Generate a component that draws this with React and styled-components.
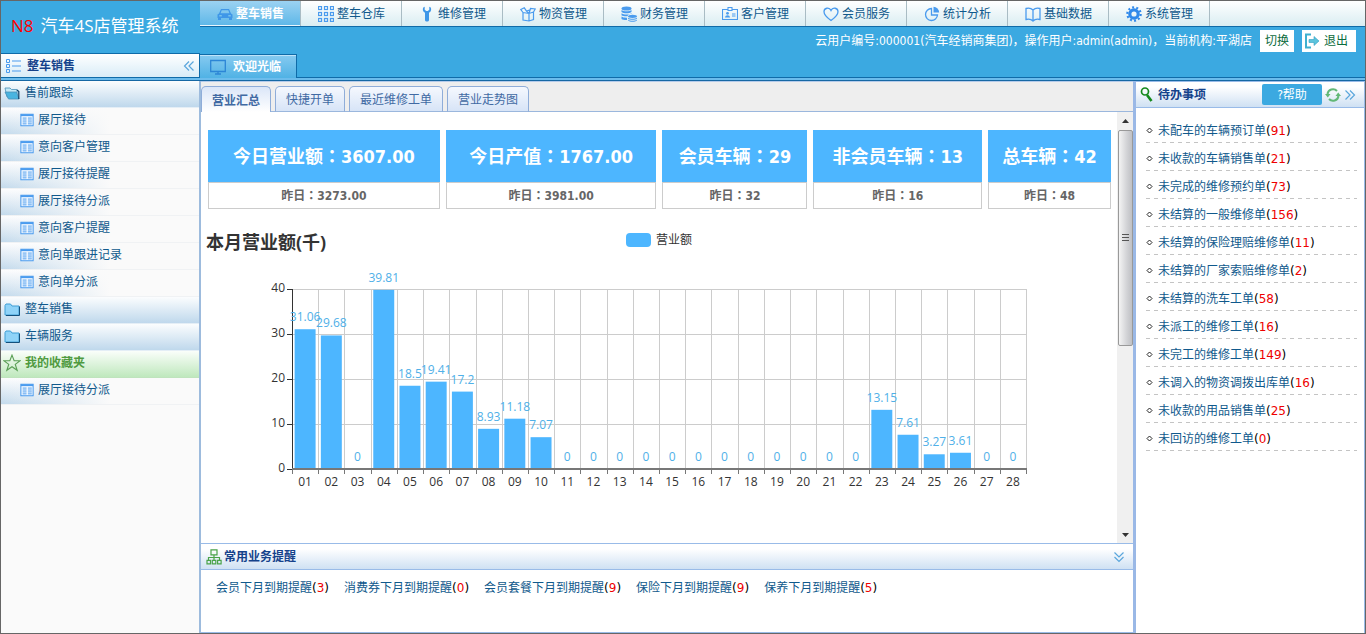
import React from "react";
import styled, { createGlobalStyle } from "styled-components";

const uiFont = `"DejaVu Sans Condensed", "Noto Sans CJK SC", sans-serif`;
const chartFont = `"Open Sans", "Noto Sans CJK SC", sans-serif`;

const GlobalStyle = createGlobalStyle`
    * {
        box-sizing: border-box;
    }
    body {
        margin: 0;
        font-family: ${uiFont};
        font-size: 12px;
        line-height: 16px;
        color: #000;
    }
    button {
        font: inherit;
        border: 0;
        padding: 0;
        background: none;
        cursor: pointer;
    }
    a {
        color: #10598c;
        text-decoration: none;
    }
    ul, h1, h2, h3, p {
        margin: 0;
        padding: 0;
        list-style: none;
        font-size: inherit;
        font-weight: inherit;
    }
    svg {
        display: block;
        flex-shrink: 0;
    }
`
const Page = styled.div`
    display: flex;
    flex-direction: column;
    height: 100vh;
    min-width: 1280px;
    border: 1px solid #666;
    background-color: #fff;
    overflow: hidden;
`
const Header = styled.header`
    display: flex;
    background-color: #3ba9e1;
`
const HeaderLeft = styled.div`
    width: 199px;
    flex-shrink: 0;
    display: flex;
    flex-direction: column;
`
const HeaderRight = styled.div`
    flex: 1;
    display: flex;
    flex-direction: column;
`
const Brand = styled.h1`
    height: 52px;
    padding: 0 0 2px 10px;
    display: flex;
    align-items: center;
    column-gap: 7px;
    font-family: ${chartFont};
    font-size: 17px;
    color: #fff;
`
const BrandMark = styled.span`
    color: #f00;
    font-weight: 500;
`
const SideTitle = styled.h2`
    height: 25px;
    padding: 0 4px;
    display: flex;
    align-items: center;
    border-top: 1px solid #0f6ba8;
    border-bottom: 1px solid #0f6ba8;
    border-right: 1px solid #0f6ba8;
    background: linear-gradient(#fff, #d8ecf7);
    color: #15428b;
    font-weight: bold;

    span {
        flex: 1;
        padding-left: 6px;
    }
`
const Nav = styled.nav`
    display: flex;
    height: 26px;
    border-bottom: 1px solid #0f6ba8;
    background: linear-gradient(#fff, #d9edf2);
`
const NavItem = styled.button`
    width: 101px;
    padding: 0 0 0 17px;
    display: flex;
    align-items: center;
    column-gap: 3px;
    border-right: 1px solid #a9bcc4;
    color: ${(p) => (p.$active ? "#fff" : "#10598c")};
    font-weight: ${(p) => (p.$active ? "bold" : "normal")};
    background: ${(p) => (p.$active ? "linear-gradient(#9bd2f2, #5db7e8)" : "none")};
    box-shadow: ${(p) => (p.$active ? "inset 0 -1px #e8f6fd" : "none")};
`
const UserBar = styled.div`
    height: 27px;
    padding: 1px 9px 0 0;
    display: flex;
    align-items: center;
    justify-content: flex-end;
    column-gap: 8px;
    color: #fff;
`
const UserButton = styled.button`
    height: 22px;
    padding: 0 ${(p) => (p.$wide ? "8px" : "5px")} 0 ${(p) => (p.$wide ? "2px" : "5px")};
    display: flex;
    align-items: center;
    column-gap: 4px;
    background-color: #fff;
    color: #0b6b3c;
`
const PageTabs = styled.div`
    height: 24px;
    display: flex;

    &::after {
        content: "";
        flex: 1;
        border-bottom: 1px solid #0f6ba8;
    }
`
const PageTab = styled.button`
    width: 97px;
    padding-left: 10px;
    display: flex;
    align-items: center;
    column-gap: 7px;
    border-top: 1px solid #0f6ba8;
    border-right: 1px solid #0f6ba8;
    background: linear-gradient(#86caf0, #50b2e5);
    box-shadow: inset 0 1px #bfe4fa;
    color: #fff;
    font-weight: bold;
`
const Strip = styled.div`
    height: 3px;
    flex-shrink: 0;
    background-color: #6cbcec;
    border-bottom: 1px solid #1668a4;
`
const Main = styled.div`
    flex: 1;
    min-height: 0;
    display: flex;
`
const Sidebar = styled.aside`
    width: 200px;
    flex-shrink: 0;
    background-color: #fafafa;
    border-right: 2px solid #9dbbdd;
`
const GroupRow = styled.button`
    width: 100%;
    height: 27px;
    padding: 0 0 2px ${(p) => (p.$green ? "2px" : "3px")};
    display: flex;
    align-items: center;
    column-gap: ${(p) => (p.$green ? "4px" : "5px")};
    border-bottom: 1px solid ${(p) => (p.$green ? "#bfe3bd" : "#e4eef6")};
    background: ${(p) => (p.$green ? "linear-gradient(#fafefa, #bfe8bd)" : "linear-gradient(#fbfdfe, #bfd8ec)")};
    color: ${(p) => (p.$green ? "#4f9a3f" : "#10598c")};
    font-weight: ${(p) => (p.$green ? "bold" : "normal")};
`
const ItemRow = styled.a`
    height: 27px;
    padding: 0 0 2px 19px;
    display: flex;
    align-items: center;
    column-gap: 4px;
    border-bottom: 1px solid #f0f2f4;
    background:
        linear-gradient(to right, rgba(250, 250, 250, 0), #fafafa 55%),
        linear-gradient(#fdfdfe, #c3daec);
`
const Center = styled.main`
    flex: 1;
    min-width: 0;
    display: flex;
    flex-direction: column;
`
const TabStrip = styled.div`
    height: 31px;
    padding-top: 4px;
    display: flex;
    column-gap: 4px;
    border-top: 1px solid #b5cbea;
    background:
        linear-gradient(#9bb7dd, #9bb7dd) bottom / 100% 1px no-repeat,
        #eee;
`
const Tab = styled.button`
    padding: 2px 10px 0;
    border: 1px solid #8fadd9;
    border-bottom: ${(p) => (p.$active ? "0" : "1px solid #9bb7dd")};
    border-radius: 5px 5px 0 0;
    background: ${(p) => (p.$active ? "linear-gradient(#dbe6f8, #fff)" : "linear-gradient(#f5f8fe, #d7e4f7)")};
    color: #416aa3;
    font-weight: ${(p) => (p.$active ? "bold" : "normal")};
`
const Scroller = styled.div`
    flex: 1;
    min-height: 0;
    display: flex;
`
const Report = styled.div`
    flex: 1;
    min-width: 0;
    overflow: hidden;
`
const Cards = styled.div`
    margin: 18px 6px 0 7px;
    display: grid;
    grid-template-columns: 232fr 211fr 145fr 169fr 123fr;
    column-gap: 6px;
`
const Card = styled.section`
    border: 1px solid #ccc;
    border-top: 0;
    text-align: center;
    font-weight: bold;
`
const CardValue = styled.h3`
    margin: 0 -1px;
    height: 52px;
    line-height: 54px;
    background-color: #4db6ff;
    color: #fff;
    font-size: 18px;
    font-weight: bold;
`
const CardNote = styled.p`
    height: 26px;
    line-height: 26px;
    border-top: 1px solid #ccc;
    color: #666;
`
const WideMark = styled.span`
    font-family: "Noto Sans CJK TC", sans-serif;
    line-height: 1;
`
const ChartHeader = styled.div`
    margin-top: 20px;
    padding: 0 5px;
    height: 26px;
    display: grid;
    grid-template-columns: 1fr auto 1fr;
    font-family: ${chartFont};
    color: #333;

    h3 {
        font-size: 18px;
        line-height: 26px;
        font-weight: bold;
    }
`
const Legend = styled.div`
    display: flex;
    align-items: center;
    height: 22px;
    column-gap: 5px;

    i {
        width: 25px;
        height: 14px;
        border-radius: 4px;
        background-color: #4db6ff;
    }
`
const ChartSvg = styled.svg`
    width: 100%;
    height: auto;
    font-family: ${chartFont};
    font-size: 12px;
`
const ScrollTrack = styled.div`
    width: 16px;
    flex-shrink: 0;
    padding: 5px 0;
    display: flex;
    flex-direction: column;
    align-items: center;
    background-color: #f0f0f0;
`
const ScrollThumb = styled.div`
    width: 15px;
    height: 216px;
    margin: 6px 0 auto;
    display: grid;
    place-items: center;
    border: 1px solid #999;
    border-radius: 2px;
    background: linear-gradient(to right, #f4f4f4, #d2d3d6 60%, #bfc0c4);
`
const PanelTitle = styled.h2`
    height: 27px;
    flex-shrink: 0;
    padding: 0 8px 0 5px;
    display: flex;
    align-items: center;
    column-gap: 2px;
    border-top: 1px solid #99bbe8;
    border-bottom: 1px solid #99bbe8;
    background: linear-gradient(#fff 20%, #cfe1f3);
    color: #15428b;
    font-weight: bold;

    span {
        flex: 1;
    }
`
const ReminderPanel = styled.section`
    height: 90px;
    flex-shrink: 0;
    border-bottom: 1px solid #99bbe8;
`
const Reminders = styled.ul`
    padding: 10px 15px;
    display: flex;
    column-gap: 15px;
`
const Counted = styled.span`
    font-family: "DejaVu Sans", "Noto Sans CJK SC", sans-serif;
`
const Count = styled.span`
    color: #e00;
`
const TodoPanel = styled.aside`
    width: 232px;
    flex-shrink: 0;
    border-left: 3px solid #9ab8e6;
    border-right: 1px solid #99bbe8;
`
const TodoTitle = styled(PanelTitle)`
    column-gap: 3px;
    padding-left: 3px;
`
const HelpButton = styled.button`
    width: 60px;
    height: 21px;
    border-radius: 2px;
    background-color: #3ba9e1;
    color: #fff;
    font-weight: normal;
`
const TodoList = styled.ul`
    padding: 7px 7px 0 10px;
`
const TodoItem = styled.li`
    height: 28px;
    padding-top: 3px;
    display: flex;
    align-items: center;
    column-gap: 5px;
    background: repeating-linear-gradient(to right, #c4c4c4 0 4px, transparent 4px 8px) bottom / 100% 1px no-repeat;
`
const IconButton = styled.button`
    display: block;
`

/* icons, all on a 16px grid */
const Svg = ({ size = 16, children, ...rest }) => (
    <svg width={size} height={size} viewBox="0 0 16 16" fill="none" stroke="#4a9bee" strokeWidth="1.3" aria-hidden="true" {...rest}>
        {children}
    </svg>
)
const CarIcon = () => (
    <Svg fill="#3f97e8" stroke="none">
        <path fillRule="evenodd" d="M4 3h8l2 4.500 1.500 1V12H15v2h-3v-2H4v2H1v-2H.5V8.500L2 7.500zM4.700 4.200 3.600 7.300h8.800l-1.100-3.100zM2.300 9v1.500h2.500V9zm9 0v1.500h2.500V9z" />
    </Svg>
)
const GridIcon = () => (
    <Svg strokeWidth="1.200">
        {[0, 6, 12].map((y) => [0, 6, 12].map((x) => <rect key={x + "-" + y} x={x + 0.5} y={y + 0.5} width="3" height="3" />))}
    </Svg>
)
const WrenchIcon = () => (
    <Svg fill="#3f97e8" stroke="none">
        <path d="M4.500 1.200C3.200 3 3.700 5.600 6 6.700V14c0 2 4 2 4 0V6.700c2.300-1.100 2.800-3.700 1.500-5.500L10.300.8v3L8.800 5H7.200L5.700 3.800v-3z" />
    </Svg>
)
const BoxIcon = () => (
    <Svg strokeWidth="1.200">
        <path d="M3 6.500V14l6 1 4.500-1.500V6M3 6.500l6 1L13.500 6M9 7.500V15M3 6.500.8 3.500l3.500-1.700L6.500 5 9 7.500l1.500-5 4.700.5L13.500 6M6.500 5l3-.8" />
    </Svg>
)
const CoinsIcon = () => (
    <Svg stroke="none" fill="#4a9bee">
        <ellipse cx="5.500" cy="2.500" rx="5" ry="2" />
        <path d="M.5 4c2 1.700 8 1.700 10 0v2c-2 1.700-8 1.700-10 0zM.5 7.300c2 1.700 8 1.700 10 0v.7H7.500L6.500 10.300C4 10.500 1.500 10 .5 9.300zM.5 10.600c1.500 1 3.500 1.200 5.500 1.100v2.200c-2 .1-4.500-.2-5.500-1z" />
        <ellipse cx="11.500" cy="10.300" rx="4.500" ry="1.600" />
        <path d="M7 11.700c2 1.400 7 1.400 9 0v1c-2 1.400-7 1.400-9 0zM7 13.700c2 1.400 7 1.400 9 0v.8c-2 1.700-7 1.700-9 0z" />
    </Svg>
)
const IdIcon = () => (
    <Svg strokeWidth="1.100">
        <path d="M5.500 3.500h-5v10h15v-10h-5M6 1.500h4v3H6z" />
        <circle cx="5.500" cy="7.300" r="1.400" fill="#4a9bee" stroke="none" />
        <path d="M3 11.500c.3-3 4.700-3 5 0z" fill="#4a9bee" stroke="none" />
        <path d="M10 8h3.500M10 10h3.500" />
    </Svg>
)
const HeartIcon = () => (
    <Svg>
        <path d="M8 14.500C3 11 1 8.500 1 5.800 1 1.800 6.300.8 8 4.500 9.700.8 15 1.800 15 5.800c0 2.700-2 5.200-7 8.700z" />
    </Svg>
)
const PieIcon = () => (
    <Svg>
        <path d="M7.500 2.500a6 6 0 1 0 6 6.500L7.500 9z" />
        <path d="M9.500.8A6 6 0 0 1 15.200 6.500H9.500z" fill="#4a9bee" stroke="none" />
    </Svg>
)
const BookIcon = () => (
    <Svg>
        <path d="M8 4C6 2 3.500 1.800 1 2.500v11c2.500-.7 5-.5 7 1.500 2-2 4.500-2.200 7-1.500v-11C12.500 1.800 10 2 8 4zv11" />
    </Svg>
)
const GearIcon = () => (
    <Svg stroke="#3089ea">
        <circle cx="8" cy="8" r="4.200" strokeWidth="3.200" />
        <circle cx="8" cy="8" r="6.700" strokeWidth="2.200" strokeDasharray="2 2.210" />
    </Svg>
)
const ListIcon = () => (
    <Svg strokeWidth="1">
        <path d="M1.500 1.500h3v3h-3zM1.500 6.500h3v3h-3zM1.500 11.500h3v3h-3zM7 3h9M7 8h9M7 13h9" />
    </Svg>
)
const MonitorIcon = () => (
    <Svg stroke="#2c86d6">
        <path d="M.7 1.500h14.600v11H.7zM8 12.500V15M5 15h6" />
    </Svg>
)
const ExitIcon = () => (
    <Svg stroke="#3fb0d0">
        <path d="M7 1.500H2v13h5" strokeWidth="2" />
        <path d="M5 6.500h5V3.500L15 8l-5 4.500v-3H5z" fill="#5cc4dc" stroke="#2f9fc4" strokeWidth=".6" />
    </Svg>
)
const TableIcon = () => (
    <Svg size={14} strokeWidth="1.200">
        <path d="M1 1.500h14v13H1z" fill="#f5faff" />
        <path d="M1 2.500h14" strokeWidth="2.200" />
        <path d="M3 5.800h4.500M3 8h4.500M3 10.200h4.500M3 12.400h4.500M9 5.800h4.500M9 8h4.500M9 10.200h4.500M9 12.400h4.500" strokeWidth="1.100" />
    </Svg>
)
const FolderIcon = () => (
    <Svg stroke="#3f9fd6" strokeWidth="1">
        <path d="M1 4.500 2 3h4.500l1.500 2h7v9H1z" fill="#8fd3f8" />
        <path d="M15.500 5.500v9H2" stroke="#14507c" />
    </Svg>
)
const FolderOpenIcon = () => (
    <Svg stroke="#4a90b8" strokeWidth=".8">
        <path d="M1 3h5l1.500 1.500H13V12H3z" fill="#c4e8f6" />
        <path d="M1 7h11.500l2.500 7H4.500z" fill="#49b4e0" />
        <path d="M13 5l1.800 1.500V14" stroke="#0d3f66" strokeWidth="1.200" />
    </Svg>
)
const StarIcon = () => (
    <Svg size={18} stroke="#5a9f55" strokeWidth="1">
        <path d="m8 1 1.900 5h5.300l-4.300 3.200 1.700 5.300L8 11.300l-4.600 3.200 1.700-5.300L.8 6h5.300z" />
    </Svg>
)
const SearchIcon = () => (
    <Svg stroke="#14891c">
        <circle cx="6" cy="4.500" r="3.500" strokeWidth="1.700" />
        <path d="m8 8 4.500 6" strokeWidth="2.600" />
    </Svg>
)
const OrgIcon = () => (
    <Svg stroke="#4aa34a" strokeWidth="1.200">
        <path d="M5 .8h6v5H5zM8 6v5M2.500 11V8.500h11V11M1 11.300h3.500v3.500H1zM6.300 11.300h3.500v3.500H6.300zM11.600 11.300h3.500v3.500h-3.500z" />
    </Svg>
)
const RefreshIcon = () => (
    <Svg stroke="#62b877" strokeWidth="2">
        <path d="M2.500 7A5.500 5.500 0 0 1 12 4M13.500 9A5.500 5.500 0 0 1 4 12" />
        <path d="M0 7h5.500L2.800 10.500zM16 9h-5.500l2.700-3.500z" fill="#62b877" stroke="none" />
    </Svg>
)
const ChevronsIcon = ({ turn = 0 }) => (
    <Svg size={12} stroke="#5aa6dc" strokeWidth="1.600">
        <path d="m2 2 6 6-6 6M8 2l6 6-6 6" transform={`rotate(${turn} 8 8)`} />
    </Svg>
)
const ArrowIcon = ({ down }) => (
    <svg width="7" height="7" viewBox="0 0 7 7" aria-hidden="true">
        <path d={down ? "M0 2h7L3.500 6z" : "M0 6h7L3.500 2z"} fill="#333" />
    </svg>
)
const GripIcon = () => (
    <svg width="7" height="8" viewBox="0 0 7 8" aria-hidden="true">
        <path d="M0 .5h7M0 3.500h7M0 6.500h7" stroke="#555" />
    </svg>
)
const DiamondIcon = () => (
    <svg width="7" height="7" viewBox="0 0 7 7" aria-hidden="true">
        <path d="m3.500 1 2.500 2.500-2.500 2.500L1 3.500z" fill="none" stroke="#222" />
    </svg>
)

const navItems = [
    { label: "整车销售", Icon: CarIcon },
    { label: "整车仓库", Icon: GridIcon },
    { label: "维修管理", Icon: WrenchIcon },
    { label: "物资管理", Icon: BoxIcon },
    { label: "财务管理", Icon: CoinsIcon },
    { label: "客户管理", Icon: IdIcon },
    { label: "会员服务", Icon: HeartIcon },
    { label: "统计分析", Icon: PieIcon },
    { label: "基础数据", Icon: BookIcon },
    { label: "系统管理", Icon: GearIcon },
]

const saleItems = ["展厅接待", "意向客户管理", "展厅接待提醒", "展厅接待分派", "意向客户提醒", "意向单跟进记录", "意向单分派"]

const tabs = ["营业汇总", "快捷开单", "最近维修工单", "营业走势图"]

const cards = [
    { label: "今日营业额", value: "3607.00", last: "3273.00" },
    { label: "今日产值", value: "1767.00", last: "3981.00" },
    { label: "会员车辆", value: "29", last: "32" },
    { label: "非会员车辆", value: "13", last: "16" },
    { label: "总车辆", value: "42", last: "48" },
]

const reminders = [
    ["会员下月到期提醒", 3],
    ["消费券下月到期提醒", 0],
    ["会员套餐下月到期提醒", 9],
    ["保险下月到期提醒", 9],
    ["保养下月到期提醒", 5],
]

const todos = [
    ["未配车的车辆预订单", 91],
    ["未收款的车辆销售单", 21],
    ["未完成的维修预约单", 73],
    ["未结算的一般维修单", 156],
    ["未结算的保险理赔维修单", 11],
    ["未结算的厂家索赔维修单", 2],
    ["未结算的洗车工单", 58],
    ["未派工的维修工单", 16],
    ["未完工的维修工单", 149],
    ["未调入的物资调拨出库单", 16],
    ["未收款的用品销售单", 25],
    ["未回访的维修工单", 0],
]

const revenue = [
    31.06, 29.68, 0, 39.81, 18.5, 19.41, 17.2, 8.93, 11.18, 7.07, 0, 0, 0, 0,
    0, 0, 0, 0, 0, 0, 0, 0, 13.15, 7.61, 3.27, 3.61, 0, 0,
]

function RevenueChart() {
    const left = 91
    const right = 825
    const top = 34
    const bottom = 214
    const step = (right - left) / revenue.length
    const y = (v) => bottom - (v / 40) * (bottom - top)
    const edge = (i) => Math.round(left + i * step)

    return (
        <ChartSvg viewBox="0 0 916 250" role="img" aria-label="本月营业额">
            <g stroke="#ccc" shapeRendering="crispEdges">
                {[10, 20, 30, 40].map((v) => <line key={v} x1={left} x2={right} y1={y(v)} y2={y(v)} />)}
                {revenue.map((_, i) => <line key={i} x1={edge(i + 1)} x2={edge(i + 1)} y1={top} y2={bottom} />)}
            </g>
            {revenue.map((v, i) => (
                <rect key={i} x={left + (i + 0.1) * step} width={step * 0.8} y={y(v)} height={bottom - y(v)} fill="#4db6ff" />
            ))}
            <g stroke="#333" shapeRendering="crispEdges">
                <line x1={left} x2={left} y1={top} y2={bottom} />
                {[0, 10, 20, 30, 40].map((v) => <line key={v} x1={left - 5} x2={left} y1={y(v)} y2={y(v)} />)}
            </g>
            <g stroke="#777" shapeRendering="crispEdges">
                <line x1={left} x2={right + 1} y1={bottom} y2={bottom} strokeWidth="2" />
                {[...revenue, 0].map((_, i) => <line key={i} x1={edge(i)} x2={edge(i)} y1={bottom} y2={bottom + 5} />)}
            </g>
            <g fill="#333" textAnchor="end">
                {[0, 10, 20, 30, 40].map((v) => <text key={v} x={left - 7} y={y(v) + 3}>{v}</text>)}
            </g>
            <g textAnchor="middle">
                {revenue.map((v, i) => (
                    <React.Fragment key={i}>
                        <text x={left + (i + 0.5) * step} y={y(v) - 8} fill="#4fb0e8">{v}</text>
                        <text x={left + (i + 0.5) * step} y={bottom + 17} fill="#333">{String(i + 1).padStart(2, "0")}</text>
                    </React.Fragment>
                ))}
            </g>
        </ChartSvg>
    )
}

function CountLink({ label, count }) {
    return (
        <Counted>
            <a href="#">{label}</a>(<Count>{count}</Count>)
        </Counted>
    )
}

function SideItem({ label }) {
    return (
        <ItemRow href="#">
            <TableIcon />
            {label}
        </ItemRow>
    )
}

export default function App() {
    return (
        <Page>
            <GlobalStyle />
            <Header>
                <HeaderLeft>
                    <Brand><BrandMark>N8</BrandMark>汽车4S店管理系统</Brand>
                    <SideTitle>
                        <ListIcon />
                        <span>整车销售</span>
                        <IconButton aria-label="收起菜单"><ChevronsIcon turn={180} /></IconButton>
                    </SideTitle>
                </HeaderLeft>
                <HeaderRight>
                    <Nav>
                        {navItems.map(({ label, Icon }, i) => (
                            <NavItem key={label} $active={i === 0}>
                                <Icon />
                                {label}
                            </NavItem>
                        ))}
                    </Nav>
                    <UserBar>
                        <p>云用户编号:000001(汽车经销商集团)，操作用户:admin(admin)，当前机构:平湖店</p>
                        <UserButton>切换</UserButton>
                        <UserButton $wide><ExitIcon />退出</UserButton>
                    </UserBar>
                    <PageTabs>
                        <PageTab><MonitorIcon />欢迎光临</PageTab>
                    </PageTabs>
                </HeaderRight>
            </Header>
            <Strip />
            <Main>
                <Sidebar>
                    <GroupRow><FolderOpenIcon />售前跟踪</GroupRow>
                    {saleItems.map((label) => <SideItem key={label} label={label} />)}
                    <GroupRow><FolderIcon />整车销售</GroupRow>
                    <GroupRow><FolderIcon />车辆服务</GroupRow>
                    <GroupRow $green><StarIcon />我的收藏夹</GroupRow>
                    <SideItem label="展厅接待分派" />
                </Sidebar>
                <Center>
                    <TabStrip>
                        {tabs.map((label, i) => <Tab key={label} $active={i === 0}>{label}</Tab>)}
                    </TabStrip>
                    <Scroller>
                        <Report>
                            <Cards>
                                {cards.map((card) => (
                                    <Card key={card.label}>
                                        <CardValue>{card.label}<WideMark>：</WideMark>{card.value}</CardValue>
                                        <CardNote>昨日<WideMark>：</WideMark>{card.last}</CardNote>
                                    </Card>
                                ))}
                            </Cards>
                            <ChartHeader>
                                <h3>本月营业额(千)</h3>
                                <Legend><i />营业额</Legend>
                            </ChartHeader>
                            <RevenueChart />
                        </Report>
                        <ScrollTrack>
                            <ArrowIcon />
                            <ScrollThumb><GripIcon /></ScrollThumb>
                            <ArrowIcon down />
                        </ScrollTrack>
                    </Scroller>
                    <ReminderPanel>
                        <PanelTitle>
                            <OrgIcon />
                            <span>常用业务提醒</span>
                            <IconButton aria-label="收起提醒"><ChevronsIcon turn={90} /></IconButton>
                        </PanelTitle>
                        <Reminders>
                            {reminders.map(([label, count]) => (
                                <li key={label}><CountLink label={label} count={count} /></li>
                            ))}
                        </Reminders>
                    </ReminderPanel>
                </Center>
                <TodoPanel>
                    <TodoTitle>
                        <SearchIcon />
                        <span>待办事项</span>
                        <HelpButton>?帮助</HelpButton>
                        <IconButton aria-label="刷新"><RefreshIcon /></IconButton>
                        <IconButton aria-label="收起待办"><ChevronsIcon /></IconButton>
                    </TodoTitle>
                    <TodoList>
                        {todos.map(([label, count]) => (
                            <TodoItem key={label}>
                                <DiamondIcon />
                                <CountLink label={label} count={count} />
                            </TodoItem>
                        ))}
                    </TodoList>
                </TodoPanel>
            </Main>
        </Page>
    )
}
